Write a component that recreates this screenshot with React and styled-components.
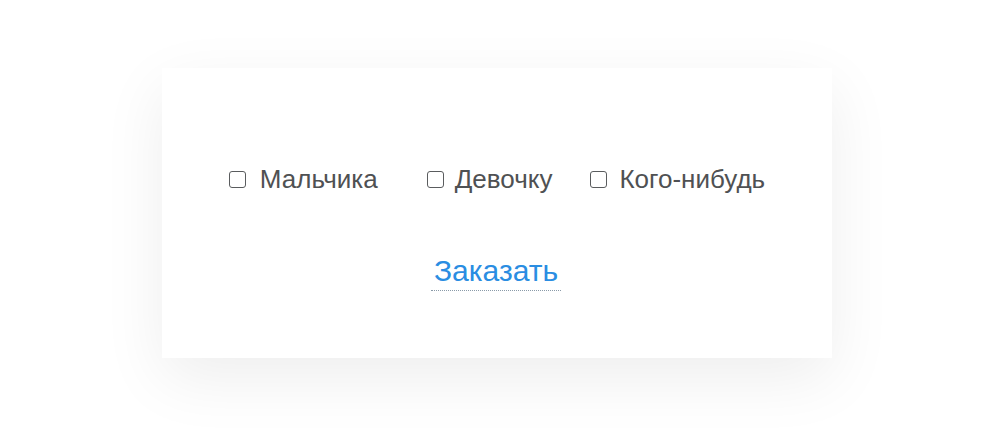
import React from 'react'
import styled, { createGlobalStyle } from 'styled-components'

const GlobalStyle = createGlobalStyle`
    html, body {
        margin: 0;
        padding: 0;
        background: #ffffff;
    }
    body {
        font-family: "Liberation Sans", Arial, sans-serif;
    }
`

const Page = styled.div`
    width: 1000px;
    height: 434px;
    padding: 68px 0 0 162px;
    box-sizing: border-box;
`

const Card = styled.div`
    width: 670px;
    height: 290px;
    background: #ffffff;
    box-shadow: 0 20px 60px rgba(0, 0, 0, 0.07);
    display: flex;
    flex-direction: column;
    align-items: center;
    padding-top: 96px;
    box-sizing: border-box;
`

const Options = styled.div`
    display: flex;
    align-items: center;
`

const Option = styled.label`
    display: flex;
    align-items: center;
    margin-left: ${props => props.$offset}px;
    font-size: 26px;
    color: #4f5153;
    cursor: pointer;
`

const Box = styled.input`
    appearance: none;
    width: 17px;
    height: 17px;
    margin: 0 ${props => props.$gap}px 0 0;
    border: 1px solid #5a5c5e;
    border-radius: 3px;
    background: #fff;
    box-sizing: border-box;
`

const Order = styled.a`
    margin-top: 59px;
    margin-left: -2px;
    padding: 0 3px 2px;
    font-size: 30px;
    color: #2a8de2;
    text-decoration: none;
    border-bottom: 1px dotted #8a9aa8;
    cursor: pointer;
`

export default function App() {
    return (
        <>
            <GlobalStyle />
            <Page>
                <Card>
                    <Options>
                        <Option $offset={0}>
                            <Box type="checkbox" $gap={14} />
                            Мальчика
                        </Option>
                        <Option $offset={49}>
                            <Box type="checkbox" $gap={11} />
                            Девочку
                        </Option>
                        <Option $offset={38}>
                            <Box type="checkbox" $gap={12} />
                            Кого-нибудь
                        </Option>
                    </Options>
                    <Order>Заказать</Order>
                </Card>
            </Page>
        </>
    )
}
